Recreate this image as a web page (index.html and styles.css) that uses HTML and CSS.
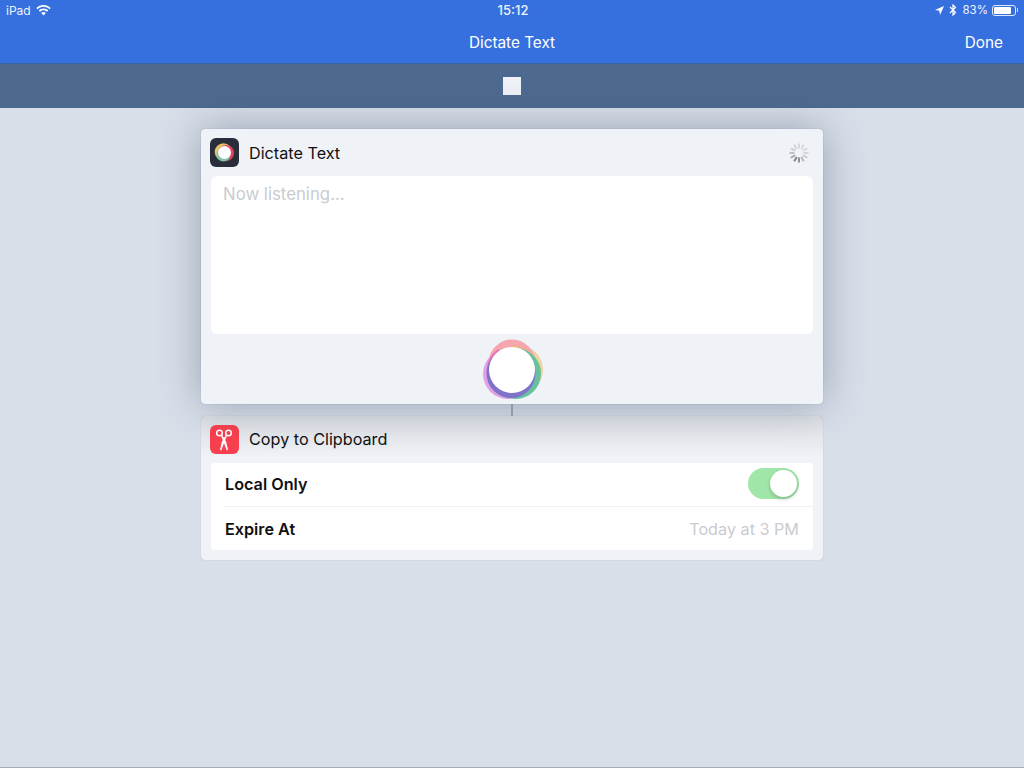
FILE: index.html
```html
<!DOCTYPE html>
<html lang="en">
<head>
    <meta charset="UTF-8">
    <title>Dictate Text</title>
    <link rel="stylesheet" href="styles.css">
</head>
<body>
    <!-- Status + nav bar -->
    <header class="topbar">
        <div class="status">
            <div class="status-left">
                <span>iPad</span>
                <svg class="wifi" width="15" height="11" viewBox="0 0 15 11">
                    <path d="M7.500 0C4.700 0 2.200 1.100.300 2.900l1.200 1.300C3 2.700 5.100 1.800 7.500 1.800s4.500.9 6 2.400l1.200-1.300C12.800 1.100 10.300 0 7.500 0z" fill="#fff"/>
                    <path d="M7.500 3.500c-1.800 0-3.500.7-4.700 1.900L4 6.700c.9-.9 2.200-1.500 3.500-1.500s2.600.6 3.500 1.500l1.200-1.300C11 4.200 9.300 3.500 7.500 3.500z" fill="#fff"/>
                    <path d="M7.500 7c-.9 0-1.700.4-2.300 1l2.300 2.600L9.800 8c-.6-.6-1.400-1-2.300-1z" fill="#fff"/>
                </svg>
            </div>
            <div class="status-time">15:12</div>
            <div class="status-right">
                <svg width="9" height="9" viewBox="0 0 9 9"><path d="M9 0L0 4l4.300.7L5 9z" fill="#fff"/></svg>
                <svg width="8" height="12" viewBox="0 0 8 12"><path d="M1 3l5.500 5.500L4 11V1l2.500 2.500L1 9" fill="none" stroke="#fff" stroke-width="1.200"/></svg>
                <span class="percent">83%</span>
                <div class="battery"><div class="battery-fill"></div></div>
                <div class="battery-tip"></div>
            </div>
        </div>
        <div class="nav">
            <div class="nav-side"></div>
            <div class="nav-title">Dictate Text</div>
            <div class="nav-side nav-done">Done</div>
        </div>
    </header>

    <div class="toolbar"><div class="stop"></div></div>

    <main class="content">
        <!-- Dictate action -->
        <section class="card card-active">
            <div class="card-head">
                <div class="app-icon app-icon-dark">
                    <svg width="29" height="29" viewBox="0 0 29 29">
                        <circle cx="13.500" cy="14" r="8.800" fill="#e8c468"/>
                        <circle cx="16" cy="15" r="8" fill="#e0435c"/>
                        <circle cx="13.500" cy="16.500" r="7" fill="#7fc5a8"/>
                        <circle cx="14.500" cy="14.500" r="6.500" fill="#fff"/>
                    </svg>
                </div>
                <div class="card-title">Dictate Text</div>
                <svg class="spinner" width="22" height="22" viewBox="0 0 22 22">
                    <g stroke-width="2">
                        <line x1="11" y1="1.500" x2="11" y2="6.500" stroke="#d4d7dc"/>
                        <line x1="11" y1="1.500" x2="11" y2="6.500" stroke="#d4d7dc" transform="rotate(30 11 11)"/>
                        <line x1="11" y1="1.500" x2="11" y2="6.500" stroke="#d4d7dc" transform="rotate(60 11 11)"/>
                        <line x1="11" y1="1.500" x2="11" y2="6.500" stroke="#d2d5da" transform="rotate(90 11 11)"/>
                        <line x1="11" y1="1.500" x2="11" y2="6.500" stroke="#c6c9ce" transform="rotate(120 11 11)"/>
                        <line x1="11" y1="1.500" x2="11" y2="6.500" stroke="#b4b7bc" transform="rotate(150 11 11)"/>
                        <line x1="11" y1="1.500" x2="11" y2="6.500" stroke="#8c8f94" transform="rotate(180 11 11)"/>
                        <line x1="11" y1="1.500" x2="11" y2="6.500" stroke="#7c7f84" transform="rotate(210 11 11)"/>
                        <line x1="11" y1="1.500" x2="11" y2="6.500" stroke="#a4a7ac" transform="rotate(240 11 11)"/>
                        <line x1="11" y1="1.500" x2="11" y2="6.500" stroke="#bcbfc4" transform="rotate(270 11 11)"/>
                        <line x1="11" y1="1.500" x2="11" y2="6.500" stroke="#c8cbd0" transform="rotate(300 11 11)"/>
                        <line x1="11" y1="1.500" x2="11" y2="6.500" stroke="#d0d3d8" transform="rotate(330 11 11)"/>
                    </g>
                </svg>
            </div>
            <div class="text-box">Now listening...</div>
            <div class="orb-row">
                <svg width="62" height="64" viewBox="0 0 62 64">
                    <circle cx="27" cy="35" r="25" fill="#dfa2e6"/>
                    <circle cx="37" cy="31" r="25" fill="#eed39f"/>
                    <circle cx="31" cy="24" r="23.500" fill="#f5a6ae"/>
                    <path d="M31 8a24 24 0 0 1 21 12" fill="none" stroke="#f0b27a" stroke-width="3"/>
                    <path d="M8 38a24 24 0 0 1 10-27" fill="none" stroke="#e673b8" stroke-width="2.500"/>
                    <circle cx="34.500" cy="34.500" r="25.500" fill="#67c19e"/>
                    <circle cx="30" cy="34.500" r="24.500" fill="#7e73c9"/>
                    <circle cx="31" cy="31" r="23" fill="#fff"/>
                </svg>
            </div>
        </section>

        <div class="connector"></div>

        <!-- Clipboard action -->
        <section class="card">
            <div class="card-head card-head-tight">
                <div class="app-icon app-icon-red">
                    <svg width="29" height="29" viewBox="0 0 29 29" fill="none" stroke="#fff">
                        <circle cx="9.500" cy="8" r="2.800" stroke-width="1.500"/>
                        <circle cx="18.500" cy="8" r="2.800" stroke-width="1.500"/>
                        <path d="M11 10.500l5.800 15 1.200-.5-1.800-8-4-7z" fill="#fff" stroke="none"/>
                        <path d="M17 10.500l-5.800 15-1.200-.5 1.800-8 4-7z" fill="#fff" stroke="none"/>
                    </svg>
                </div>
                <div class="card-title">Copy to Clipboard</div>
            </div>
            <div class="params">
                <div class="param">
                    <div class="param-label">Local Only</div>
                    <div class="toggle"><div class="knob"></div></div>
                </div>
                <div class="param">
                    <div class="param-label">Expire At</div>
                    <div class="param-value">Today at 3 PM</div>
                </div>
            </div>
        </section>
    </main>
</body>
</html>
```

FILE: styles.css
```css
* {
    box-sizing: border-box;
}
body {
    margin: 0;
    height: 768px;
    overflow: hidden;
    display: flex;
    flex-direction: column;
    font-family: 'Inter', 'Liberation Sans', sans-serif;
    background-color: #d8dfe9;
    color: #111;
}
.topbar {
    height: 64px;
    background-color: #3670de;
    color: #fff;
    border-bottom: 1px solid #3a62ab;
}
.status {
    height: 20px;
    padding: 0 5px 0 6px;
    display: flex;
    align-items: center;
    justify-content: space-between;
    font-size: 12px;
    color: #eef3fd;
}
.status-left, .status-right {
    width: 200px;
    display: flex;
    align-items: center;
}
.status-left {
    gap: 5px;
}
.wifi {
    margin-top: 1px;
}
.status-right {
    justify-content: flex-end;
    gap: 5px;
}
.status-time {
    font-size: 13px;
    font-weight: 500;
    margin-left: 1px;
}
.percent {
    font-size: 11.5px;
}
.battery {
    width: 24px;
    height: 11px;
    margin-left: -1px;
    padding: 1px;
    border: 1px solid #dfe8fa;
    border-radius: 3px;
}
.battery-fill {
    width: 83%;
    height: 100%;
    background-color: #fff;
    border-radius: 1px;
}
.battery-tip {
    width: 1px;
    height: 4px;
    margin-left: -4px;
    margin-right: 1px;
    background-color: #c8d6f4;
}
.nav {
    height: 43px;
    padding: 2px 21px 0;
    display: flex;
    align-items: center;
    justify-content: space-between;
    font-size: 15.3px;
}
.nav-side {
    width: 80px;
}
.nav-done {
    text-align: right;
}
.toolbar {
    height: 44px;
    background-color: #4e698f;
    display: flex;
    align-items: center;
    justify-content: center;
}
.stop {
    width: 18px;
    height: 18px;
    background-color: #eef1f6;
}
.content {
    flex: 1;
    padding-top: 21px;
    display: flex;
    flex-direction: column;
    align-items: center;
    border-bottom: 1px solid #a5acb5;
}
.card {
    width: 622px;
    padding: 0 10px;
    background-color: #eff2f7;
    border-radius: 4px;
    box-shadow: 0 0 1px rgba(60, 75, 100, 0.4);
    background-image: linear-gradient(#dcdfe3, #eff2f7 42px);
}
.card-active {
    position: relative;
    z-index: 1;
    background-image: none;
    box-shadow: 0 0 1px rgba(60, 75, 100, 0.5), 0 0 42px rgba(60, 75, 100, 0.42);
}
.card-head {
    height: 47px;
    margin-left: -1px;
    display: flex;
    align-items: center;
    gap: 10px;
}
.card-head-tight .card-title {
    margin-bottom: 2px;
}
.app-icon {
    width: 29px;
    height: 29px;
    border-radius: 6px;
}
.app-icon svg {
    display: block;
}
.app-icon-dark {
    background-color: #2a2d3a;
}
.app-icon-red {
    background-color: #f9404f;
}
.card-title {
    flex: 1;
    font-size: 16.2px;
}
.spinner {
    margin-right: 3px;
}
.text-box {
    height: 158px;
    padding: 8px 12px;
    background-color: #fff;
    border-radius: 6px;
    font-size: 16.8px;
    color: #c9cbd0;
}
.orb-row {
    height: 70px;
    display: flex;
    justify-content: center;
    padding-top: 5px;
}
.connector {
    width: 2px;
    height: 12px;
    background-color: #8f9aa6;
    position: relative;
    z-index: 2;
}
.params {
    background-color: #fff;
    margin-bottom: 10px;
    border-radius: 3px;
}
.param {
    height: 43px;
    margin-left: 14px;
    padding-right: 14px;
    display: flex;
    align-items: center;
    justify-content: space-between;
}
.param:first-child {
    height: 44px;
    padding-bottom: 2px;
    border-bottom: 1px solid #eef0f3;
}
.param-label {
    font-size: 16.2px;
    font-weight: 600;
}
.param-value {
    font-size: 16.2px;
    color: #c9cbd0;
}
.toggle {
    width: 51px;
    height: 31px;
    padding: 2px;
    background-color: #a0e6a8;
    border-radius: 16px;
    display: flex;
    justify-content: flex-end;
}
.knob {
    width: 27px;
    height: 27px;
    background-color: #fff;
    border-radius: 50%;
    box-shadow: 0 2px 4px rgba(0, 0, 0, 0.2);
}
```
